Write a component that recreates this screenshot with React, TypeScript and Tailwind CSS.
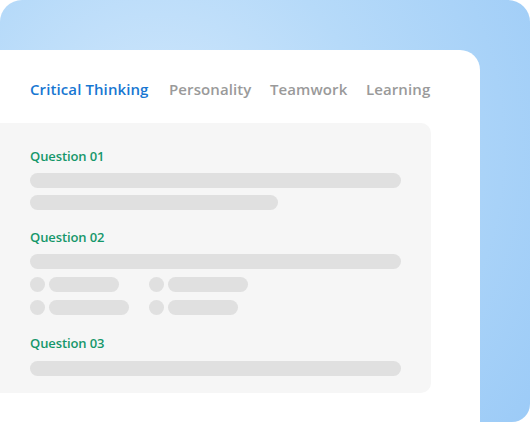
import React from "react";

const tabs = [
  { t: "Critical Thinking", w: "w-[139px]" },
  { t: "Personality", w: "w-[101px]" },
  { t: "Teamwork", w: "w-[96px]" },
  { t: "Learning", w: "" },
];

const Bar = ({ w }: { w: string }) => (
  <div className={`h-[15px] rounded-full bg-[#e0e0e0] ${w}`} />
);

const Option = ({ w }: { w: string }) => (
  <div className="flex items-center gap-[4px]">
    <div className="h-[15px] w-[15px] rounded-full bg-[#e0e0e0]" />
    <Bar w={w} />
  </div>
);

const Label = ({ children }: { children: React.ReactNode }) => (
  <div className="text-[13px] leading-[16px] font-semibold tracking-[-0.1px] text-[#15976a]">{children}</div>
);

export default function App() {
  return (
    <div className="w-[530px] h-[423px] overflow-hidden bg-white font-['Open_Sans',sans-serif]">
      <div className="h-[422px] rounded-tl-[22px] rounded-tr-[22px] rounded-br-[18px] bg-[radial-gradient(circle_at_30%_35%,#d2e8fc_0%,#b6daf9_45%,#9ccbf7_100%)] pt-[50px] pr-[50px]">
        <div className="h-[373px] rounded-tr-[20px] bg-white pt-[27px]">
          <div className="flex pl-[30px] text-[15px] leading-[24px] font-semibold tracking-[0.1px]">
            {tabs.map((tab, i) => (
              <span
                key={tab.t}
                className={`${tab.w} ${i === 0 ? "text-[#1877d2]" : "text-[#9a9a9a]"}`}
              >
                {tab.t}
              </span>
            ))}
          </div>
          <div className="mt-[22px] w-[431px] h-[270px] rounded-r-[10px] bg-[#f6f6f6] pl-[30px] pr-[30px] pt-[25px]">
            <Label>Question 01</Label>
            <div className="mt-[9px] flex flex-col gap-[7px]">
              <Bar w="w-[371px]" />
              <Bar w="w-[248px]" />
            </div>
            <div className="mt-[19px]">
              <Label>Question 02</Label>
            </div>
            <div className="mt-[9px]">
              <Bar w="w-[371px]" />
            </div>
            <div className="mt-[8px] grid grid-cols-[119px_1fr] gap-y-[8px]">
              <Option w="w-[70px]" />
              <Option w="w-[80px]" />
              <Option w="w-[80px]" />
              <Option w="w-[70px]" />
            </div>
            <div className="mt-[20px]">
              <Label>Question 03</Label>
            </div>
            <div className="mt-[10px]">
              <Bar w="w-[371px]" />
            </div>
          </div>
        </div>
      </div>
    </div>
  );
}
